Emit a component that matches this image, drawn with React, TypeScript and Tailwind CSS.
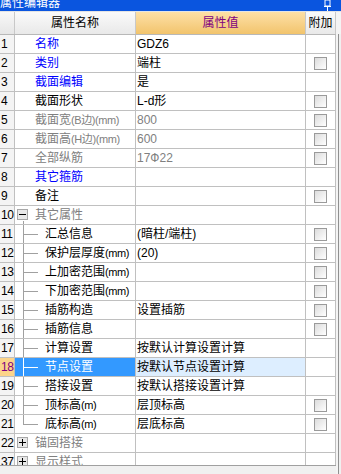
import React from 'react';

type Row = {
  no: string;
  name: string;
  value?: string;
  tone?: 'blue' | 'gray' | 'black';
  valueGray?: boolean;
  check?: boolean;
  child?: boolean;
  last?: boolean;
  group?: '+' | '-';
  selected?: boolean;
};

const rows: Row[] = [
  { no: '1', name: '名称', value: 'GDZ6', tone: 'blue' },
  { no: '2', name: '类别', value: '端柱', tone: 'blue', check: true },
  { no: '3', name: '截面编辑', value: '是', tone: 'blue' },
  { no: '4', name: '截面形状', value: 'L-d形', check: true },
  { no: '5', name: '截面宽(B边)(mm)', value: '800', tone: 'gray', valueGray: true, check: true },
  { no: '6', name: '截面高(H边)(mm)', value: '600', tone: 'gray', valueGray: true, check: true },
  { no: '7', name: '全部纵筋', value: '17Ф22', tone: 'gray', valueGray: true, check: true },
  { no: '8', name: '其它箍筋', tone: 'blue' },
  { no: '9', name: '备注', check: true },
  { no: '10', name: '其它属性', tone: 'gray', group: '-' },
  { no: '11', name: '汇总信息', value: '(暗柱/端柱)', child: true, check: true },
  { no: '12', name: '保护层厚度(mm)', value: '(20)', child: true, check: true },
  { no: '13', name: '上加密范围(mm)', child: true, check: true },
  { no: '14', name: '下加密范围(mm)', child: true, check: true },
  { no: '15', name: '插筋构造', value: '设置插筋', child: true, check: true },
  { no: '16', name: '插筋信息', child: true, check: true },
  { no: '17', name: '计算设置', value: '按默认计算设置计算', child: true },
  { no: '18', name: '节点设置', value: '按默认节点设置计算', child: true, selected: true },
  { no: '19', name: '搭接设置', value: '按默认搭接设置计算', child: true },
  { no: '20', name: '顶标高(m)', value: '层顶标高', child: true, check: true },
  { no: '21', name: '底标高(m)', value: '层底标高', child: true, check: true, last: true },
  { no: '22', name: '锚固搭接', tone: 'gray', group: '+' },
  { no: '37', name: '显示样式', tone: 'gray', group: '+' },
];

const Check = () => (
  <div className="w-[13px] h-[13px] border border-[#9a9a9a] bg-gradient-to-br from-[#dcdcdc] to-[#ffffff]" />
);

const Box = ({ sign }: { sign: '+' | '-' }) => (
  <div className="w-[11px] h-[11px] border border-[#a8a8a8] bg-[#e8e8e8] flex items-center justify-center relative">
    <div className="w-[7px] h-px bg-black" />
    {sign === '+' && <div className="absolute w-px h-[7px] bg-black" />}
  </div>
);

// unit parts like (mm) are drawn narrower, as in the old bitmap font
const Name = ({ text }: { text: string }) => {
  const i = text.indexOf('(');
  if (i < 0) return <>{text}</>;
  return (
    <>
      {text.slice(0, i)}
      <span className="text-[11px] tracking-[-0.4px]">{text.slice(i)}</span>
    </>
  );
};

export default function App() {
  return (
    <div
      className="w-[341px] h-[474px] overflow-hidden bg-white text-[12px] text-black flex flex-col"
      style={{ fontFamily: '"Liberation Sans", "Noto Sans CJK SC", sans-serif' }}
    >
      {/* title bar */}
      <div className="h-[11px] shrink-0 bg-[#0a55df] overflow-hidden relative">
        <div className="text-white text-[12px] leading-[12px] -mt-[3px]">属性编辑器</div>
        <svg width="9" height="11" viewBox="0 0 9 11" className="absolute left-[323px] top-0">
          <rect x="2" y="0" width="5" height="6" fill="none" stroke="#fff" strokeWidth="1" />
          <line x1="1" y1="6.5" x2="8" y2="6.5" stroke="#fff" />
          <line x1="4.5" y1="7" x2="4.5" y2="11" stroke="#fff" />
        </svg>
      </div>
      <div className="h-px shrink-0 bg-[#e4e4e4]" />

      <div className="flex flex-1 min-h-0">
        <div className="w-[336px] flex flex-col min-h-0">
          {/* header */}
          <div className="h-[23px] shrink-0 flex border-b border-[#b8b8b8]">
            <div className="w-[15px] border-r border-[#c8c8c8] bg-gradient-to-b from-[#f8f8f8] to-[#e6e6e6]" />
            <div className="w-[121px] border-r border-[#c8c8c8] bg-gradient-to-b from-[#fafafa] to-[#e9e9e9] flex items-center justify-center">
              属性名称
            </div>
            <div className="w-[170px] border-r border-[#c8c8c8] bg-gradient-to-b from-[#fde0a6] to-[#f2c46c] flex items-center justify-center text-[#800080]">
              属性值
            </div>
            <div className="w-[30px] border-r border-[#c8c8c8] bg-gradient-to-b from-[#fafafa] to-[#e9e9e9] flex items-center justify-center">
              附加
            </div>
          </div>

          {/* rows */}
          <div className="flex-1 min-h-0 overflow-hidden">
            {rows.map((r) => {
              const nameColor = r.selected
                ? 'text-white'
                : r.tone === 'blue'
                ? 'text-[#0000ff]'
                : r.tone === 'gray'
                ? 'text-[#808080]'
                : 'text-black';
              return (
                <div key={r.no} className="h-[19px] flex border-b border-[#c0c0c0]">
                  <div
                    className={`w-[15px] border-r border-[#c0c0c0] leading-[18px] pl-[1px] tracking-[-0.5px] ${
                      r.selected ? 'bg-[#fcd48a] text-[#800080]' : 'bg-[#f4f4f4]'
                    }`}
                  >
                    {r.no}
                  </div>
                  <div
                    className={`w-[121px] border-r border-[#c0c0c0] relative flex items-center whitespace-nowrap overflow-hidden ${
                      r.selected ? 'bg-[#3399ff]' : ''
                    } ${nameColor}`}
                  >
                    {r.child && (
                      <>
                        <div
                          className={`absolute left-[8px] top-0 w-px ${r.last ? 'h-[9px]' : 'h-[19px]'} ${
                            r.selected ? 'bg-white' : 'bg-[#a0a0a0]'
                          }`}
                        />
                        <div
                          className={`absolute left-[8px] top-[9px] w-[15px] h-px ${
                            r.selected ? 'bg-white' : 'bg-[#a0a0a0]'
                          }`}
                        />
                      </>
                    )}
                    {r.group && (
                      <div className="absolute left-[2px] top-[3px]">
                        <Box sign={r.group} />
                        {r.group === '-' && <div className="absolute left-[6px] top-[12px] w-px h-[4px] bg-[#a0a0a0]" />}
                      </div>
                    )}
                    <span className={r.child ? 'pl-[30px]' : 'pl-[20px]'}>
                      <Name text={r.name} />
                    </span>
                  </div>
                  <div
                    className={`w-[170px] border-r border-[#c0c0c0] flex items-center pl-[1px] whitespace-nowrap overflow-hidden ${
                      r.selected ? 'bg-[#ddeeff]' : ''
                    } ${r.valueGray ? 'text-[#808080]' : 'text-black'}`}
                  >
                    {r.value}
                  </div>
                  <div className="w-[30px] border-r border-[#c0c0c0] flex items-center justify-center">
                    {r.check && <Check />}
                  </div>
                </div>
              );
            })}
          </div>
          <div className="h-[9px] shrink-0 border-t border-[#a0a0a0] bg-[#f0f0f0]" />
        </div>
        {/* right edge */}
        <div className="w-[5px] flex flex-col">
          <div className="h-[22px] bg-[#f4f4f4]" />
          <div className="flex-1 flex">
            <div className="w-[2px] bg-[#f4f4f4]" />
            <div className="w-px bg-[#909090]" />
            <div className="flex-1 bg-[#f0f0f0]" />
          </div>
        </div>
      </div>
    </div>
  );
}
